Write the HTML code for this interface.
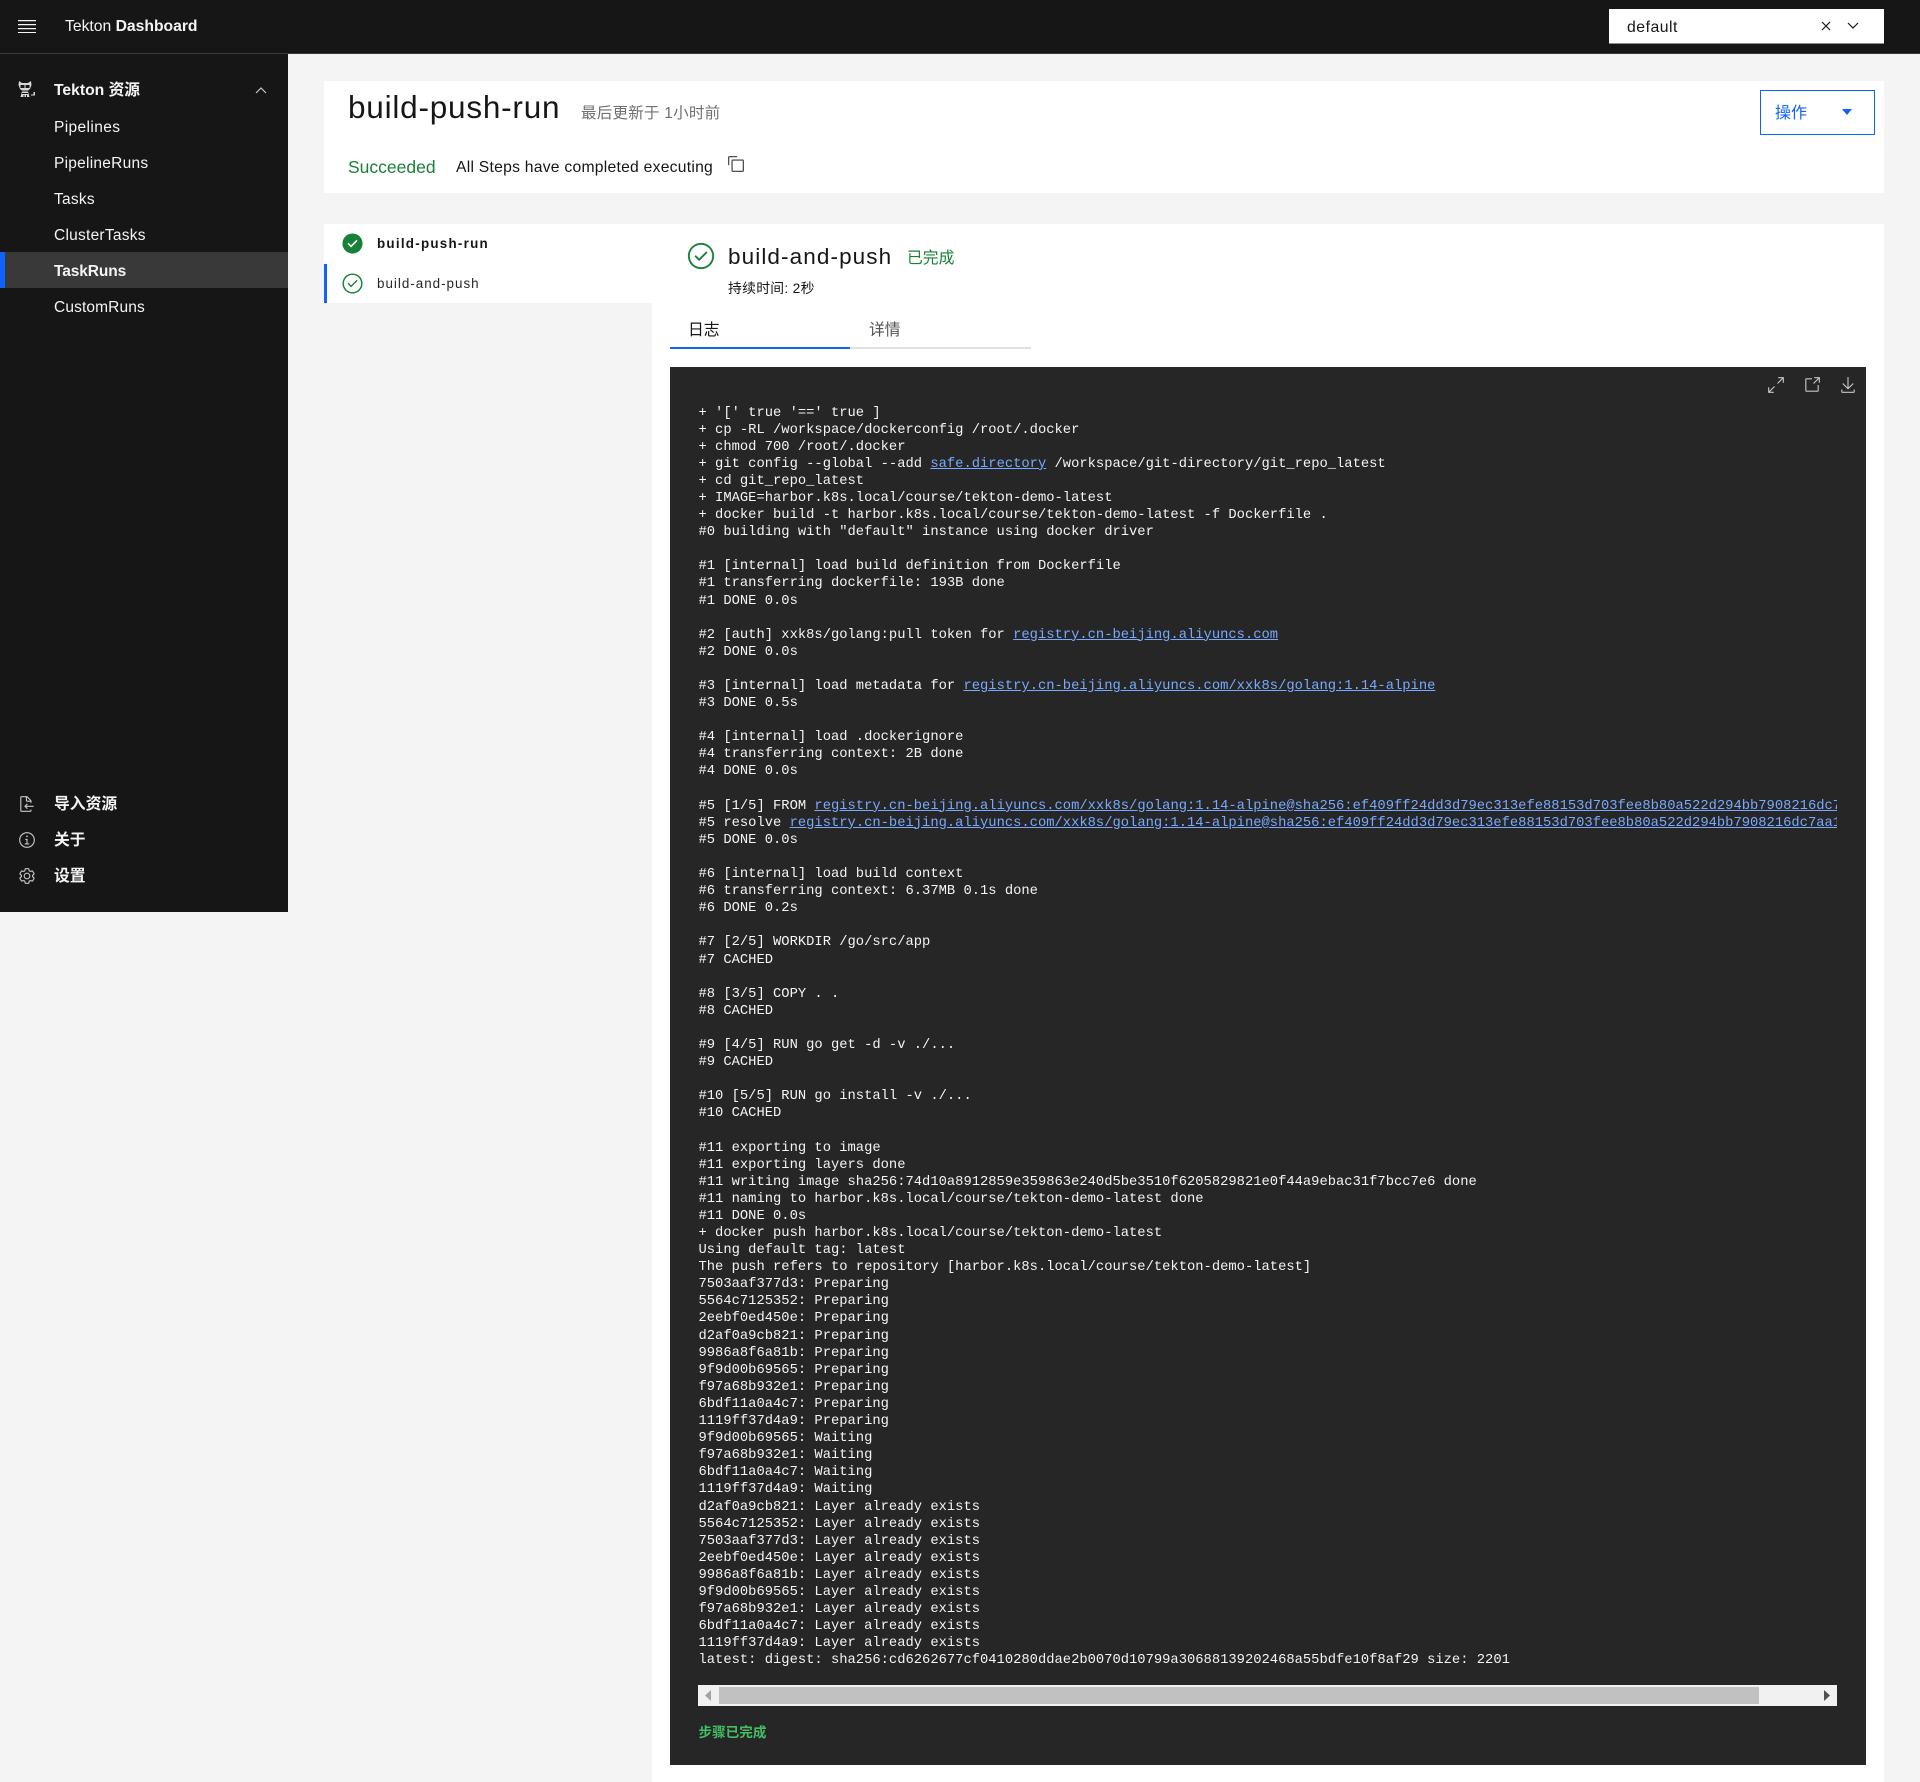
<!DOCTYPE html>
<html lang="zh"><head><meta charset="utf-8"><title>Tekton Dashboard</title>
<style>
html,body{margin:0;padding:0;background:#f4f4f4}
body{position:relative;width:1920px;height:1782px;overflow:hidden;font-family:"Liberation Sans","Noto Sans CJK SC",sans-serif;color:#161616}
.a{position:absolute;white-space:pre}
.t{position:absolute;white-space:pre;line-height:24px}
svg{position:absolute;display:block}
.n{color:#f4f4f4;font-size:15.5px;left:54px;letter-spacing:.25px}
.w{color:#f4f4f4}
#log{position:absolute;left:698.5px;top:404.5px;width:1138.5px;height:1270px;overflow:hidden;margin:0;font:13.8px/17.1px "Liberation Mono",monospace;color:#f4f4f4;white-space:pre}
#log a{color:#78a9ff;text-decoration:underline}
</style></head><body>

<!-- header -->
<div class="a" style="left:0;top:0;width:1920px;height:53px;background:#161616;border-bottom:1px solid #393939"></div>
<svg style="left:18px;top:19px" width="18" height="14" viewBox="0 0 18 14"><path fill="#f4f4f4" d="M0 1h18v1.2H0zM0 5h18v1.2H0zM0 9h18v1.2H0zM0 13h18v1.2H0z"/></svg>
<div class="t w" style="left:65px;top:15px;font-size:15.7px">Tekton <b style="font-weight:700">Dashboard</b></div>
<div class="a" style="left:1609px;top:9px;width:275px;height:34px;background:#fff;border-bottom:1px solid #8d8d8d"></div>
<div class="t" style="left:1627px;top:16px;font-size:15.8px;letter-spacing:.5px">default</div>
<svg style="left:1820px;top:20px" width="12" height="12" viewBox="0 0 12 12"><path stroke="#161616" stroke-width="1.2" d="M2 2l8 8M10 2l-8 8"/></svg>
<svg style="left:1846px;top:22px" width="14" height="8" viewBox="0 0 14 8"><path fill="none" stroke="#161616" stroke-width="1.2" d="M2 1l5 5 5-5"/></svg>

<!-- sidebar -->
<div class="a" style="left:0;top:54px;width:288px;height:858px;background:#161616"></div>
<div class="a" style="left:0;top:252px;width:288px;height:36px;background:#393939"></div>
<div class="a" style="left:0;top:252px;width:5px;height:36px;background:#0f62fe"></div>
<svg style="left:17px;top:80px" width="19" height="19" viewBox="0 0 19 19"><g fill="#d8d8d8"><path d="M2 1l3 2h6l3-2 .5 4L13 9l-2 1.500H5L3 9 1.500 5z"/><path d="M5 11.500h6l1.500 5.500H3.500z"/><path d="M14 14.500h2.500V12h1.500v3.500h-4z"/></g><path fill="#161616" d="M3.500 5h4v3h-4zM8.500 5h4v3h-4zM5 13h6v1H5zM6.500 15h1v2h-1zM9 15h1v2H9z"/></svg>
<div class="t w" style="left:54px;top:79px;font-size:15.7px;font-weight:700">Tekton 资源</div>
<svg style="left:254px;top:86px" width="14" height="8" viewBox="0 0 14 8"><path fill="none" stroke="#c6c6c6" stroke-width="1.2" d="M2 7l5-5 5 5"/></svg>
<div class="t n" style="top:115.500px;letter-spacing:.38px">Pipelines</div>
<div class="t n" style="top:151.500px">PipelineRuns</div>
<div class="t n" style="top:187.500px">Tasks</div>
<div class="t n" style="top:223.500px">ClusterTasks</div>
<div class="t n" style="top:259.500px;font-weight:700;letter-spacing:-.1px">TaskRuns</div>
<div class="t n" style="top:295.500px;letter-spacing:.13px">CustomRuns</div>

<svg style="left:18px;top:795px" width="18" height="18" viewBox="0 0 32 32" fill="#c6c6c6"><path d="M28 19H14.830l2.580-2.590L16 15l-5 5 5 5 1.410-1.410L14.830 21H28v-2z"/><path d="M24 14v-4a1 1 0 0 0-.29-.71l-7-7A1 1 0 0 0 16 2H6a2 2 0 0 0-2 2v24a2 2 0 0 0 2 2h16a2 2 0 0 0 2-2v-2h-2v2H6V4h8v6a2 2 0 0 0 2 2h6v2zm-8-4V4.410L21.590 10z"/></svg>
<div class="t n" style="top:793px;font-weight:700;font-size:15.8px;letter-spacing:0">导入资源</div>
<svg style="left:18px;top:831px" width="18" height="18" viewBox="0 0 32 32" fill="#c6c6c6"><path d="M17 22v-8h-4v2h2v6h-3v2h8v-2h-3z"/><path d="M16 8a1.500 1.500 0 1 0 1.500 1.500A1.500 1.500 0 0 0 16 8z"/><path d="M16 30a14 14 0 1 1 14-14 14 14 0 0 1-14 14zm0-26a12 12 0 1 0 12 12A12 12 0 0 0 16 4z"/></svg>
<div class="t n" style="top:829px;font-weight:700;font-size:15.8px;letter-spacing:0">关于</div>
<svg style="left:18px;top:867px" width="18" height="18" viewBox="0 0 32 32" fill="#c6c6c6"><path d="M27,16.76c0-.25,0-.5,0-.76s0-.51,0-.77l1.92-1.68A2,2,0,0,0,29.3,11L26.94,7a2,2,0,0,0-1.73-1,2,2,0,0,0-.64.1l-2.43.82a11.35,11.35,0,0,0-1.31-.75l-.51-2.52a2,2,0,0,0-2-1.61H13.64a2,2,0,0,0-2,1.61l-.51,2.52a11.48,11.48,0,0,0-1.32.75L7.43,6.06A2,2,0,0,0,6.79,6,2,2,0,0,0,5.06,7L2.7,11a2,2,0,0,0,.41,2.51L5,15.24c0,.25,0,.5,0,.76s0,.51,0,.77L3.11,18.45A2,2,0,0,0,2.7,21L5.06,25a2,2,0,0,0,1.73,1,2,2,0,0,0,.64-.1l2.43-.82a11.35,11.35,0,0,0,1.31.75l.51,2.52a2,2,0,0,0,2,1.61h4.72a2,2,0,0,0,2-1.61l.51-2.52a11.48,11.48,0,0,0,1.32-.75l2.42.82a2,2,0,0,0,.64.1,2,2,0,0,0,1.73-1L29.3,21a2,2,0,0,0-.41-2.51ZM25.21,24l-3.43-1.16a8.86,8.86,0,0,1-2.71,1.57L18.36,28H13.64l-.71-3.55a9.36,9.36,0,0,1-2.7-1.57L6.79,24,4.43,20l2.72-2.4a8.9,8.9,0,0,1,0-3.13L4.43,12,6.79,8l3.43,1.16a8.86,8.86,0,0,1,2.71-1.57L13.64,4h4.72l.71,3.55a9.36,9.36,0,0,1,2.7,1.57L25.21,8,27.57,12l-2.72,2.4a8.9,8.9,0,0,1,0,3.13L27.57,20Z"/><path d="M16,22a6,6,0,1,1,6-6A5.94,5.94,0,0,1,16,22Zm0-10a3.91,3.91,0,0,0-4,4,3.91,3.91,0,0,0,4,4,3.91,3.91,0,0,0,4-4A3.91,3.91,0,0,0,16,12Z"/></svg>
<div class="t n" style="top:865px;font-weight:700;font-size:15.8px;letter-spacing:0">设置</div>

<!-- top card -->
<div class="a" style="left:324px;top:81px;width:1560px;height:112px;background:#fff"></div>
<div class="a" style="left:348px;top:86px;font-size:31.5px;line-height:42px;letter-spacing:.78px">build-push-run</div>
<div class="t" style="left:581px;top:102px;font-size:15.5px;letter-spacing:.25px;color:#6f6f6f">最后更新于 1小时前</div>
<div class="t" style="left:348px;top:155px;font-size:17.5px;color:#198038">Succeeded</div>
<div class="t" style="left:456px;top:156px;font-size:15.7px;letter-spacing:.25px">All Steps have completed executing</div>
<svg style="left:727px;top:155px" width="18" height="18" viewBox="0 0 32 32" fill="#393939"><path d="M28 10v18H10V10h18m0-2H10a2 2 0 0 0-2 2v18a2 2 0 0 0 2 2h18a2 2 0 0 0 2-2V10a2 2 0 0 0-2-2Z"/><path d="M4 18H2V4a2 2 0 0 1 2-2h14v2H4Z"/></svg>
<div class="a" style="left:1760px;top:90px;width:113px;height:43px;border:1px solid #0f62fe"></div>
<div class="t" style="left:1775px;top:101.500px;font-size:16px;color:#0f62fe">操作</div>
<svg style="left:1842px;top:109px" width="10" height="6" viewBox="0 0 10 6"><path fill="#0f62fe" d="M0 0h10L5 6z"/></svg>

<!-- steps panel -->
<div class="a" style="left:324px;top:224px;width:328px;height:79px;background:#fff"></div>
<div class="a" style="left:324px;top:264px;width:3px;height:39px;background:#0f62fe"></div>
<svg style="left:341px;top:232px" width="23" height="23" viewBox="0 0 32 32"><circle cx="16" cy="16" r="12" fill="#fff"/><path fill="#198038" d="M16 2a14 14 0 1 0 14 14A14 14 0 0 0 16 2zm-2 19.590l-5-5L10.590 15 14 18.410 21.410 11 23 12.590z"/></svg>
<div class="t" style="left:377px;top:232px;font-size:13.4px;font-weight:700;letter-spacing:1.25px">build-push-run</div>
<svg style="left:341px;top:272px" width="23" height="23" viewBox="0 0 32 32" fill="#198038"><path d="M14 21.414l-5-5.001L10.413 15 14 18.586 21.585 11 23 12.415l-9 8.999z"/><path d="M16 2a14 14 0 1 0 14 14A14 14 0 0 0 16 2zm0 26a12 12 0 1 1 12-12 12 12 0 0 1-12 12z"/></svg>
<div class="t" style="left:377px;top:271.500px;font-size:13.4px;letter-spacing:1px;color:#262626">build-and-push</div>

<!-- detail panel -->
<div class="a" style="left:652px;top:224px;width:1232px;height:1558px;background:#fff"></div>
<svg style="left:686px;top:240.500px" width="30" height="30" viewBox="0 0 32 32" fill="#198038"><path d="M14 21.414l-5-5.001L10.413 15 14 18.586 21.585 11 23 12.415l-9 8.999z"/><path d="M16 2a14 14 0 1 0 14 14A14 14 0 0 0 16 2zm0 26a12 12 0 1 1 12-12 12 12 0 0 1-12 12z"/></svg>
<div class="a" style="left:728px;top:241px;font-size:22.5px;line-height:32px;letter-spacing:1.1px">build-and-push</div>
<div class="t" style="left:907px;top:247px;font-size:15.8px;color:#198038">已完成</div>
<div class="t" style="left:728px;top:277px;font-size:13.8px;letter-spacing:.3px">持续时间: 2秒</div>
<div class="t" style="left:688px;top:318.500px;font-size:15.8px">日志</div>
<div class="t" style="left:869px;top:318.500px;font-size:15.8px;color:#525252">详情</div>
<div class="a" style="left:670px;top:347px;width:180px;height:2px;background:#0f62fe"></div>
<div class="a" style="left:850px;top:347px;width:181px;height:2px;background:#e0e0e0"></div>

<!-- log -->
<div class="a" style="left:670px;top:367px;width:1196px;height:1398px;background:#262626"></div>
<svg style="left:1767px;top:376px" width="18" height="18" viewBox="0 0 32 32" fill="#c6c6c6"><path d="M20 2v2h6.586L18 12.590 19.410 14 28 5.410V12h2V2H20zM14 19.410 12.590 18 4 26.590V20H2v10h10v-2H5.410L14 19.410z"/></svg>
<svg style="left:1803px;top:376px" width="18" height="18" viewBox="0 0 32 32" fill="#c6c6c6"><path d="M26,28H6a2.0027,2.0027,0,0,1-2-2V6A2.0027,2.0027,0,0,1,6,4H16V6H6V26H26V16h2V26A2.0027,2.0027,0,0,1,26,28Z"/><path d="M20 2v2h6.586L18 12.586 19.414 14 28 5.414V12h2V2H20z"/></svg>
<svg style="left:1839px;top:376px" width="18" height="18" viewBox="0 0 32 32" fill="#c6c6c6"><path d="M26 24v4H6v-4H4v4a2 2 0 0 0 2 2h20a2 2 0 0 0 2-2v-4z"/><path d="M26 14l-1.410-1.410L17 20.170V2h-2v18.170l-7.590-7.580L6 14l10 10 10-10z"/></svg>
<pre id="log">+ '[' true '==' true ]
+ cp -RL /workspace/dockerconfig /root/.docker
+ chmod 700 /root/.docker
+ git config --global --add <a>safe.directory</a> /workspace/git-directory/git_repo_latest
+ cd git_repo_latest
+ IMAGE=harbor.k8s.local/course/tekton-demo-latest
+ docker build -t harbor.k8s.local/course/tekton-demo-latest -f Dockerfile .
#0 building with "default" instance using docker driver

#1 [internal] load build definition from Dockerfile
#1 transferring dockerfile: 193B done
#1 DONE 0.0s

#2 [auth] xxk8s/golang:pull token for <a>registry.cn-beijing.aliyuncs.com</a>
#2 DONE 0.0s

#3 [internal] load metadata for <a>registry.cn-beijing.aliyuncs.com/xxk8s/golang:1.14-alpine</a>
#3 DONE 0.5s

#4 [internal] load .dockerignore
#4 transferring context: 2B done
#4 DONE 0.0s

#5 [1/5] FROM <a>registry.cn-beijing.aliyuncs.com/xxk8s/golang:1.14-alpine@sha256:ef409ff24dd3d79ec313efe88153d703fee8b80a522d294bb7908216dc7aa1f2</a>
#5 resolve <a>registry.cn-beijing.aliyuncs.com/xxk8s/golang:1.14-alpine@sha256:ef409ff24dd3d79ec313efe88153d703fee8b80a522d294bb7908216dc7aa1f2</a>
#5 DONE 0.0s

#6 [internal] load build context
#6 transferring context: 6.37MB 0.1s done
#6 DONE 0.2s

#7 [2/5] WORKDIR /go/src/app
#7 CACHED

#8 [3/5] COPY . .
#8 CACHED

#9 [4/5] RUN go get -d -v ./...
#9 CACHED

#10 [5/5] RUN go install -v ./...
#10 CACHED

#11 exporting to image
#11 exporting layers done
#11 writing image sha256:74d10a8912859e359863e240d5be3510f6205829821e0f44a9ebac31f7bcc7e6 done
#11 naming to harbor.k8s.local/course/tekton-demo-latest done
#11 DONE 0.0s
+ docker push harbor.k8s.local/course/tekton-demo-latest
Using default tag: latest
The push refers to repository [harbor.k8s.local/course/tekton-demo-latest]
7503aaf377d3: Preparing
5564c7125352: Preparing
2eebf0ed450e: Preparing
d2af0a9cb821: Preparing
9986a8f6a81b: Preparing
9f9d00b69565: Preparing
f97a68b932e1: Preparing
6bdf11a0a4c7: Preparing
1119ff37d4a9: Preparing
9f9d00b69565: Waiting
f97a68b932e1: Waiting
6bdf11a0a4c7: Waiting
1119ff37d4a9: Waiting
d2af0a9cb821: Layer already exists
5564c7125352: Layer already exists
7503aaf377d3: Layer already exists
2eebf0ed450e: Layer already exists
9986a8f6a81b: Layer already exists
9f9d00b69565: Layer already exists
f97a68b932e1: Layer already exists
6bdf11a0a4c7: Layer already exists
1119ff37d4a9: Layer already exists
latest: digest: sha256:cd6262677cf0410280ddae2b0070d10799a30688139202468a55bdfe10f8af29 size: 2201</pre>
<div class="a" style="left:698px;top:1685px;width:1139px;height:21px;background:#f1f1f1"></div>
<div class="a" style="left:719px;top:1687px;width:1040px;height:17px;background:#c1c1c1"></div>
<svg style="left:705px;top:1690px" width="7" height="11" viewBox="0 0 7 11"><path fill="#a3a3a3" d="M6 0v11L0 5.500z"/></svg>
<svg style="left:1823px;top:1690px" width="7" height="11" viewBox="0 0 7 11"><path fill="#505050" d="M1 0v11l6-5.500z"/></svg>
<div class="t" style="left:698.5px;top:1721px;font-size:13.6px;font-weight:700;color:#42be65">步骤已完成</div>
</body></html>
